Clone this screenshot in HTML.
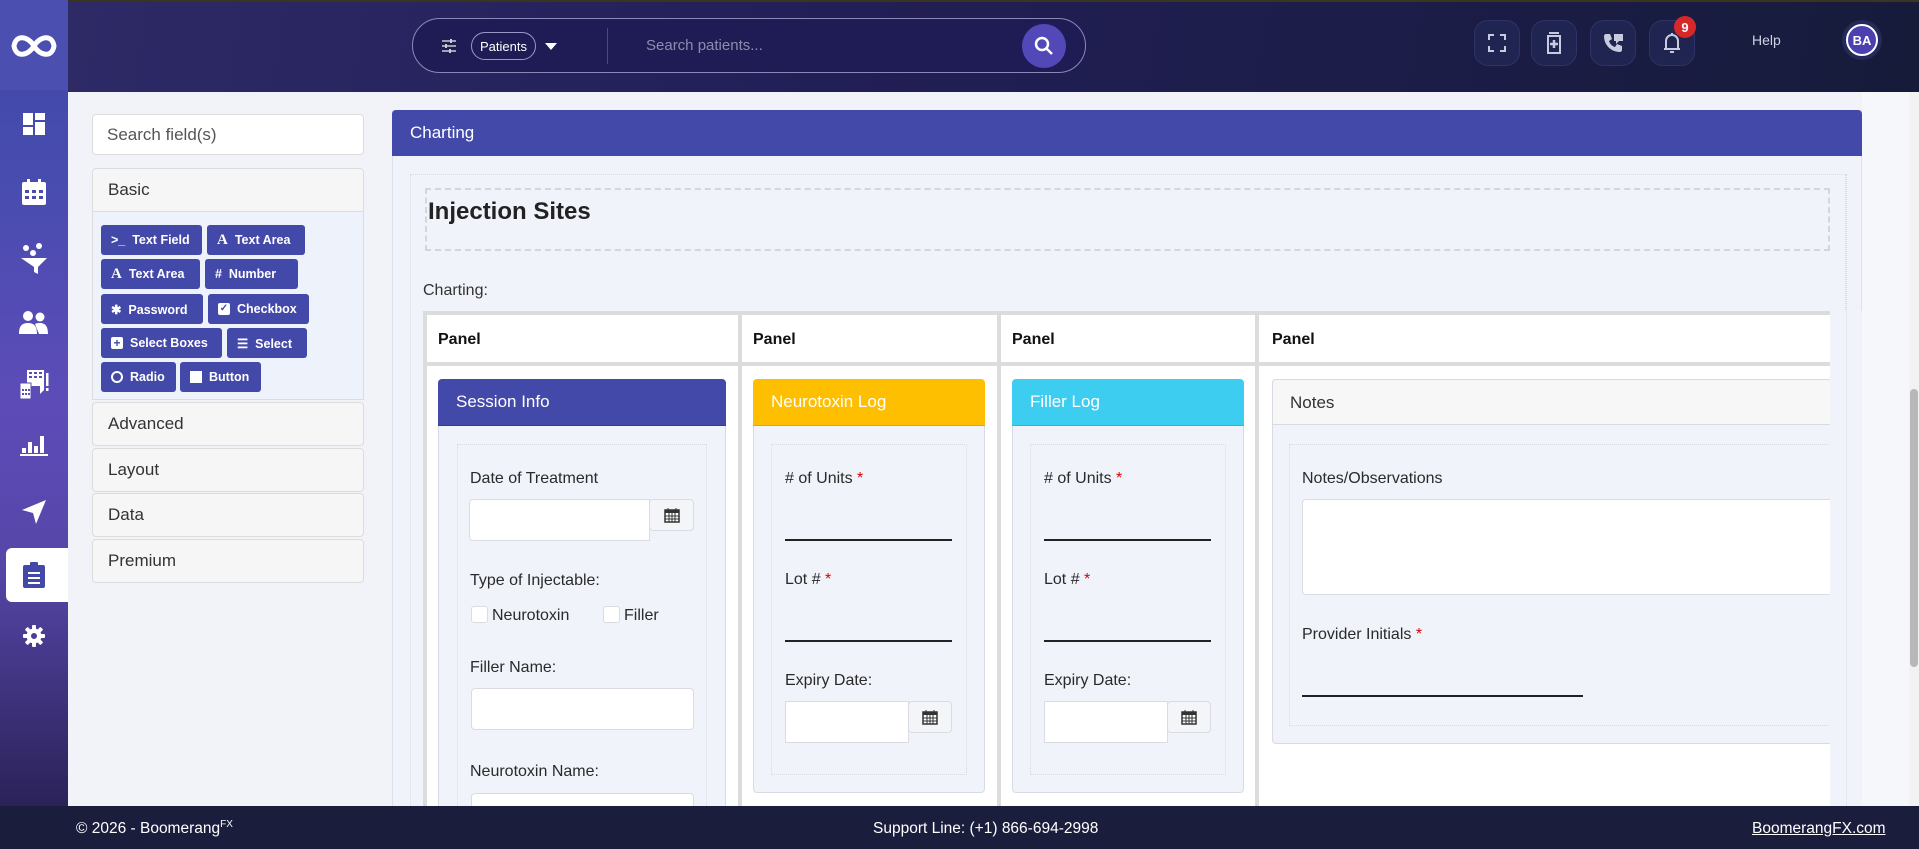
<!DOCTYPE html>
<html><head><meta charset="utf-8"><style>
*{box-sizing:border-box;margin:0;padding:0}
body{width:1919px;height:849px;overflow:hidden;font-family:"Liberation Sans",Arial,sans-serif;background:#f1f3f9;position:relative;color:#222}
.a{position:absolute}
#hdr{left:0;top:0;width:1919px;height:92px;background:linear-gradient(100deg,#2f2b68 0%,#231f58 40%,#161b3a 100%);border-top:2px solid #3a3520}
#side{left:0;top:0;width:68px;height:806px;background:linear-gradient(180deg,#3e49a8 0%,#4a4cb0 25%,#5d4cb8 50%,#5646a8 70%,#2a2258 100%)}
.si{position:absolute;left:0;width:68px;display:flex;justify-content:center}
.btn{position:absolute;height:30px;background:#4349a8;color:#fff;font-size:12.5px;font-weight:bold;border-radius:3px;display:flex;align-items:center;padding-left:10px;gap:7px}
.acc{position:absolute;left:92px;width:272px;background:#f6f6f6;border:1px solid #dcdcdc;border-radius:4px;font-size:17px;color:#333;padding-left:15px;display:flex;align-items:center}
.lbl{position:absolute;font-size:16px;color:#2a2a2a}
.req{color:#d00}
.inp{position:absolute;background:#fff;border:1px solid #d9dce3;border-radius:4px}
.cal{position:absolute;background:#f4f5f8;border:1px solid #d9dce3;border-radius:4px;display:flex;align-items:center;justify-content:center}
.line{position:absolute;height:1.5px;background:#222}
.dot{position:absolute;border:1.5px dotted #d8dbe3}
.ph{position:absolute;height:47px;color:#fff;font-size:17px;display:flex;align-items:center;padding-left:18px;border-radius:4px 4px 0 0}
.pb{position:absolute;background:#f0f3fa;border:1px solid #d8dbe3;border-top:none;border-radius:0 0 4px 4px}
.ib{position:absolute;top:20px;width:46px;height:46px;border-radius:14px;background:#1f2450;border:1px solid #2e3468;display:flex;align-items:center;justify-content:center}
</style></head><body>
<div class="a" id="hdr"></div>
<div class="a" id="side"></div>
<div class="a" style="left:0;top:0;width:68px;height:90px;background:#4a4fb0"></div>
<svg class="a" style="left:8px;top:30px" width="52" height="32" viewBox="0 0 52 32"><path d="M26 16 C20 6 8 4 6 16 C8 28 20 26 26 16 C32 6 44 4 46 16 C44 28 32 26 26 16Z" fill="none" stroke="#fff" stroke-width="5"/></svg>
<div class="a" style="left:412px;top:18px;width:674px;height:55px;border:1.5px solid #8a88b8;border-radius:28px;background:#1f1c55"></div>
<svg class="a" style="left:441px;top:38px" width="16" height="16" viewBox="0 0 16 16" stroke="#ccc" stroke-width="1.5"><path d="M1 3h14M1 8h14M1 13h14"/><path d="M10 1v4M5 6v4M9 11v4" stroke-width="2"/></svg>
<div class="a" style="left:471px;top:32px;width:65px;height:28px;border:1px solid #9a98c8;border-radius:14px;color:#fff;font-size:13px;display:flex;align-items:center;justify-content:center">Patients</div>
<div class="a" style="left:545px;top:43px;width:0;height:0;border-left:6px solid transparent;border-right:6px solid transparent;border-top:7px solid #fff"></div>
<div class="a" style="left:607px;top:28px;width:1px;height:36px;background:#4a4880"></div>
<div class="a" style="left:646px;top:37px;color:#8d8cae;font-size:15px">Search patients...</div>
<div class="a" style="left:1022px;top:24px;width:44px;height:44px;border-radius:50%;background:#5348b8"></div>
<svg class="a" style="left:1034px;top:36px" width="20" height="20" viewBox="0 0 20 20" fill="none" stroke="#fff" stroke-width="2.5"><circle cx="8" cy="8" r="6"/><path d="M12.5 12.5L18 18"/></svg>
<div class="ib" style="left:1474px"><svg width="18" height="18" viewBox="0 0 18 18" fill="none" stroke="#c8cbe0" stroke-width="2"><path d="M1 6V1h5M12 1h5v5M17 12v5h-5M6 17H1v-5"/></svg></div>
<div class="ib" style="left:1531px"><svg width="16" height="22" viewBox="0 0 16 22" fill="none" stroke="#c8cbe0" stroke-width="2"><path d="M3 1h10M2 4h12v17H2z"/><path d="M8 8v8M4 12h8" stroke-width="2.5"/></svg></div>
<div class="ib" style="left:1590px"><svg width="22" height="22" viewBox="0 0 22 22" fill="#c8cbe0"><path d="M4 2l4 0 2 5-3 2c1 3 3 5 6 6l2-3 5 2v4c0 1-1 2-2 2C9 20 2 13 2 4c0-1 1-2 2-2z"/><path d="M12 2h9v7h-4l-3 3v-3h-2z"/></svg></div>
<div class="ib" style="left:1649px"><svg width="20" height="24" viewBox="0 0 20 24" fill="none" stroke="#c8cbe0" stroke-width="2"><path d="M4 18V10a6 6 0 0112 0v8M2 18h16M10 2v2M8 21h4"/></svg></div>
<div class="a" style="left:1674px;top:16px;width:22px;height:22px;border-radius:50%;background:#d62828;color:#fff;font-size:13px;font-weight:bold;display:flex;align-items:center;justify-content:center">9</div>
<div class="a" style="left:1752px;top:32px;color:#d0d2e4;font-size:14px">Help</div>
<div class="a" style="left:1842px;top:20px;width:40px;height:40px;border-radius:50%;background:#242a5a"></div>
<div class="a" style="left:1846px;top:24px;width:32px;height:32px;border-radius:50%;background:#4c3fb0;border:2px solid #fff;color:#fff;font-size:13px;font-weight:bold;display:flex;align-items:center;justify-content:center">BA</div>
<div class="si" style="top:113px"><svg width="22" height="22" viewBox="0 0 22 22" fill="#fff"><rect x="0" y="0" width="10" height="12"/><rect x="12" y="0" width="10" height="7"/><rect x="0" y="14" width="10" height="8"/><rect x="12" y="9" width="10" height="13"/></svg></div>
<div class="si" style="top:179px"><svg width="24" height="26" viewBox="0 0 24 26" fill="#fff"><rect x="0" y="3" width="24" height="23" rx="2"/><rect x="5" y="0" width="3" height="6"/><rect x="16" y="0" width="3" height="6"/><g fill="#4a4cb0"><rect x="3" y="11" width="4" height="3"/><rect x="10" y="11" width="4" height="3"/><rect x="17" y="11" width="4" height="3"/><rect x="3" y="17" width="4" height="3"/><rect x="10" y="17" width="4" height="3"/><rect x="17" y="17" width="4" height="3"/></g></svg></div>
<div class="si" style="top:243px"><svg width="26" height="32" viewBox="0 0 26 32" fill="#fff"><circle cx="5" cy="5" r="3"/><circle cx="18" cy="3" r="3"/><circle cx="12" cy="10" r="3"/><path d="M0 15h26l-9 9v7l-4-2v-5z"/></svg></div>
<div class="si" style="top:310px"><svg width="30" height="24" viewBox="0 0 30 24" fill="#fff"><circle cx="9" cy="6" r="5"/><circle cx="21" cy="7" r="4.5"/><path d="M0 24c0-8 3-11 9-11s9 3 9 11zM16 14c2-1 3-1 5-1 5 0 8 3 8 11H20z"/></svg></div>
<div class="si" style="top:370px"><svg width="30" height="30" viewBox="0 0 30 30"><rect x="8" y="0" width="17" height="16" fill="#fff"/><g fill="#5a4cb5"><rect x="10" y="2" width="3" height="2"/><rect x="15" y="2" width="3" height="2"/><rect x="20" y="2" width="3" height="2"/><rect x="10" y="6" width="3" height="2"/><rect x="15" y="6" width="3" height="2"/><rect x="20" y="6" width="3" height="2"/></g><path d="M21 16h4v4l-4 4z" fill="#fff"/><rect x="1" y="13" width="11" height="16" fill="#fff" stroke="#5a4cb5" stroke-width="1"/><g fill="#5a4cb5"><rect x="3" y="19" width="2" height="2"/><rect x="6" y="19" width="2" height="2"/><rect x="9" y="19" width="2" height="2"/><rect x="3" y="23" width="2" height="2"/><rect x="6" y="23" width="2" height="2"/><rect x="9" y="23" width="2" height="2"/></g><rect x="27" y="3" width="2.5" height="13" fill="#fff"/><rect x="27" y="18" width="2.5" height="3" fill="#fff"/></svg></div>
<div class="si" style="top:434px"><svg width="28" height="22" viewBox="0 0 28 22" fill="#fff"><rect x="2" y="14" width="4" height="5"/><rect x="8" y="8" width="4" height="11"/><rect x="14" y="12" width="4" height="7"/><rect x="20" y="2" width="4" height="17"/><rect x="0" y="20" width="28" height="2"/></svg></div>
<div class="si" style="top:500px"><svg width="24" height="24" viewBox="0 0 24 24" fill="#fff"><path d="M24 0L0 10l11 3 3 11z"/></svg></div>
<div class="a" style="left:6px;top:548px;width:62px;height:54px;background:#fff;border-radius:6px 0 0 6px"></div>
<div class="si" style="top:562px"><svg width="22" height="26" viewBox="0 0 22 26" fill="#4349a8"><rect x="0" y="3" width="22" height="23" rx="2"/><rect x="7" y="0" width="8" height="6" rx="1"/><g fill="#fff"><rect x="5" y="10" width="12" height="2"/><rect x="5" y="15" width="12" height="2"/><rect x="5" y="20" width="12" height="2"/></g></svg></div>
<div class="si" style="top:625px"><svg width="22" height="22" viewBox="0 0 22 22"><g fill="#fff"><rect x="9" y="0" width="4" height="22" rx="1"/><rect x="0" y="9" width="22" height="4" rx="1"/><rect x="9" y="0" width="4" height="22" rx="1" transform="rotate(45 11 11)"/><rect x="9" y="0" width="4" height="22" rx="1" transform="rotate(-45 11 11)"/><circle cx="11" cy="11" r="7.5"/></g><circle cx="11" cy="11" r="3" fill="#4a3e98"/></svg></div>
<div class="a" style="left:92px;top:114px;width:272px;height:41px;background:#fff;border:1px solid #dcdcdc;border-radius:4px;font-size:17px;color:#555;padding:10px 14px">Search field(s)</div>
<div class="acc" style="top:168px;height:44px;border-radius:4px 4px 0 0">Basic</div>
<div class="a" style="left:92px;top:212px;width:272px;height:188px;background:#eef2fb;border:1px solid #dcdcdc;border-top:none"></div>
<div class="btn" style="left:101px;top:225px;width:101px">&gt;_ &nbsp;Text Field</div>
<div class="btn" style="left:207px;top:225px;width:98px"><b style="font-family:'Liberation Serif';font-size:15px">A</b> Text Area</div>
<div class="btn" style="left:101px;top:259px;width:99px"><b style="font-family:'Liberation Serif';font-size:15px">A</b> Text Area</div>
<div class="btn" style="left:205px;top:259px;width:93px"># &nbsp;Number</div>
<div class="btn" style="left:101px;top:294px;width:102px">✱ &nbsp;Password</div>
<div class="btn" style="left:208px;top:294px;width:101px"><span style="display:inline-block;width:12px;height:12px;background:#fff;border-radius:2px;color:#4349a8;font-size:10px;line-height:12px;text-align:center">✓</span> Checkbox</div>
<div class="btn" style="left:101px;top:328px;width:121px"><span style="display:inline-block;width:12px;height:12px;background:#fff;border-radius:2px;color:#4349a8;font-size:12px;line-height:12px;text-align:center">+</span> Select Boxes</div>
<div class="btn" style="left:227px;top:328px;width:80px">☰ &nbsp;Select</div>
<div class="btn" style="left:101px;top:362px;width:75px"><span style="display:inline-block;width:12px;height:12px;border:2.5px solid #fff;border-radius:50%"></span> Radio</div>
<div class="btn" style="left:180px;top:362px;width:81px"><span style="display:inline-block;width:12px;height:12px;background:#fff"></span> Button</div>
<div class="acc" style="top:402px;height:44px">Advanced</div>
<div class="acc" style="top:448px;height:44px">Layout</div>
<div class="acc" style="top:493px;height:44px">Data</div>
<div class="acc" style="top:539px;height:44px">Premium</div>
<div class="a" style="left:392px;top:110px;width:1470px;height:700px;background:#f0f3fa;border:1px solid #dde1ea"></div>
<div class="a" style="left:392px;top:110px;width:1470px;height:46px;background:#4349a8;border-radius:4px 4px 0 0;color:#fff;font-size:17px;padding:13px 18px">Charting</div>
<div class="dot" style="left:410px;top:174px;width:1436px;height:640px"></div>
<div class="a" style="left:425px;top:188px;width:1405px;height:63px;border:2px dashed #d4d6dc"></div>
<div class="a" style="left:428px;top:198px;font-size:24px;font-weight:bold;color:#222">Injection Sites</div>
<div class="a" style="left:423px;top:282px;font-size:16px;color:#333">Charting:</div>
<div class="a" style="left:423px;top:311px;width:1407px;height:500px;background:#fff;border:4px solid #dcdcdc;border-right:none;border-bottom:none"></div>
<div class="a" style="left:423px;top:362px;width:1407px;height:4px;background:#dcdcdc"></div>
<div class="a" style="left:738px;top:311px;width:4px;height:500px;background:#dcdcdc"></div>
<div class="a" style="left:997px;top:311px;width:4px;height:500px;background:#dcdcdc"></div>
<div class="a" style="left:1255px;top:311px;width:4px;height:500px;background:#dcdcdc"></div>
<div class="a" style="left:438px;top:331px;font-size:16px;font-weight:bold;color:#111">Panel</div>
<div class="a" style="left:753px;top:331px;font-size:16px;font-weight:bold;color:#111">Panel</div>
<div class="a" style="left:1012px;top:331px;font-size:16px;font-weight:bold;color:#111">Panel</div>
<div class="a" style="left:1272px;top:331px;font-size:16px;font-weight:bold;color:#111">Panel</div>
<div class="ph" style="left:438px;top:379px;width:288px;background:#4349a8;border-bottom:1px solid #353b90">Session Info</div>
<div class="pb" style="left:438px;top:426px;width:288px;height:400px"></div>
<div class="dot" style="left:457px;top:444px;width:250px;height:380px"></div>
<div class="lbl" style="left:470px;top:470px">Date of Treatment</div>
<div class="inp" style="left:469px;top:499px;width:181px;height:42px;border-radius:4px 0 0 4px"></div>
<div class="cal" style="left:649px;top:499px;width:45px;height:32px"><svg width="16" height="16" viewBox="0 0 16 16"><rect x="1" y="3" width="14" height="12" fill="#fff" stroke="#333" stroke-width="1.5"/><rect x="1" y="3" width="14" height="3" fill="#333"/><path d="M4 1v4M12 1v4M1 9h14M1 12h14M5 6v9M8 6v9M11 6v9" stroke="#333" stroke-width="1"/></svg></div>
<div class="lbl" style="left:470px;top:572px">Type of Injectable:</div>
<div class="inp" style="left:471px;top:606px;width:17px;height:17px;border-radius:3px"></div>
<div class="lbl" style="left:492px;top:607px">Neurotoxin</div>
<div class="inp" style="left:603px;top:606px;width:17px;height:17px;border-radius:3px"></div>
<div class="lbl" style="left:624px;top:607px">Filler</div>
<div class="lbl" style="left:470px;top:659px">Filler Name:</div>
<div class="inp" style="left:471px;top:688px;width:223px;height:42px"></div>
<div class="lbl" style="left:470px;top:763px">Neurotoxin Name:</div>
<div class="inp" style="left:471px;top:793px;width:223px;height:42px"></div>
<div class="ph" style="left:753px;top:379px;width:232px;background:#fdbf00;border-bottom:1px solid #e0a800">Neurotoxin Log</div>
<div class="pb" style="left:753px;top:426px;width:232px;height:367px"></div>
<div class="dot" style="left:771px;top:444px;width:196px;height:331px"></div>
<div class="lbl" style="left:785px;top:470px"># of Units <span class="req">*</span></div>
<div class="line" style="left:785px;top:539px;width:167px"></div>
<div class="lbl" style="left:785px;top:571px">Lot # <span class="req">*</span></div>
<div class="line" style="left:785px;top:640px;width:167px"></div>
<div class="lbl" style="left:785px;top:672px">Expiry Date:</div>
<div class="inp" style="left:785px;top:701px;width:124px;height:42px;border-radius:0"></div>
<div class="cal" style="left:908px;top:701px;width:44px;height:32px"><svg width="16" height="16" viewBox="0 0 16 16"><rect x="1" y="3" width="14" height="12" fill="#fff" stroke="#333" stroke-width="1.5"/><rect x="1" y="3" width="14" height="3" fill="#333"/><path d="M4 1v4M12 1v4M1 9h14M1 12h14M5 6v9M8 6v9M11 6v9" stroke="#333" stroke-width="1"/></svg></div>
<div class="ph" style="left:1012px;top:379px;width:232px;background:#3dcdf0;border-bottom:1px solid #2ab8d8">Filler Log</div>
<div class="pb" style="left:1012px;top:426px;width:232px;height:367px"></div>
<div class="dot" style="left:1030px;top:444px;width:196px;height:331px"></div>
<div class="lbl" style="left:1044px;top:470px"># of Units <span class="req">*</span></div>
<div class="line" style="left:1044px;top:539px;width:167px"></div>
<div class="lbl" style="left:1044px;top:571px">Lot # <span class="req">*</span></div>
<div class="line" style="left:1044px;top:640px;width:167px"></div>
<div class="lbl" style="left:1044px;top:672px">Expiry Date:</div>
<div class="inp" style="left:1044px;top:701px;width:124px;height:42px;border-radius:0"></div>
<div class="cal" style="left:1167px;top:701px;width:44px;height:32px"><svg width="16" height="16" viewBox="0 0 16 16"><rect x="1" y="3" width="14" height="12" fill="#fff" stroke="#333" stroke-width="1.5"/><rect x="1" y="3" width="14" height="3" fill="#333"/><path d="M4 1v4M12 1v4M1 9h14M1 12h14M5 6v9M8 6v9M11 6v9" stroke="#333" stroke-width="1"/></svg></div>
<div class="a" style="left:1272px;top:379px;width:558px;height:365px;background:#f0f3fa;border:1px solid #d8dbe3;border-right:none;border-radius:4px 0 0 4px"></div>
<div class="a" style="left:1272px;top:379px;width:558px;height:46px;background:#f7f7f7;border:1px solid #d8dbe3;border-right:none;border-radius:4px 0 0 0;font-size:17px;color:#333;padding:13px 17px">Notes</div>
<div class="dot" style="left:1289px;top:444px;width:560px;height:282px;border-right:none"></div>
<div class="lbl" style="left:1302px;top:470px">Notes/Observations</div>
<div class="inp" style="left:1302px;top:499px;width:540px;height:96px"></div>
<div class="lbl" style="left:1302px;top:626px">Provider Initials <span class="req">*</span></div>
<div class="line" style="left:1302px;top:695px;width:281px"></div>
<div class="a" style="left:1830px;top:311px;width:32px;height:500px;background:#f0f3fa"></div>
<div class="a" style="left:1846px;top:174px;width:1px;height:640px;border-left:1.5px dotted #d8dbe3"></div>
<div class="a" style="left:1862px;top:92px;width:57px;height:714px;background:#f6f7fb"></div>
<div class="a" style="left:1909px;top:92px;width:10px;height:714px;background:#f2f2f2"></div>
<div class="a" style="left:1910px;top:389px;width:8px;height:278px;background:#b8b8b8;border-radius:4px"></div>
<div class="a" style="left:0;top:806px;width:1919px;height:43px;background:#1b1d3c"></div>
<div class="a" style="left:76px;top:819px;color:#fff;font-size:15.5px">© 2026 - Boomerang<sup style="font-size:10px">FX</sup></div>
<div class="a" style="left:873px;top:820px;color:#fff;font-size:15.5px">Support Line: (+1) 866-694-2998</div>
<div class="a" style="left:1752px;top:820px;color:#fff;font-size:15.5px;text-decoration:underline">BoomerangFX.com</div>
</body></html>
